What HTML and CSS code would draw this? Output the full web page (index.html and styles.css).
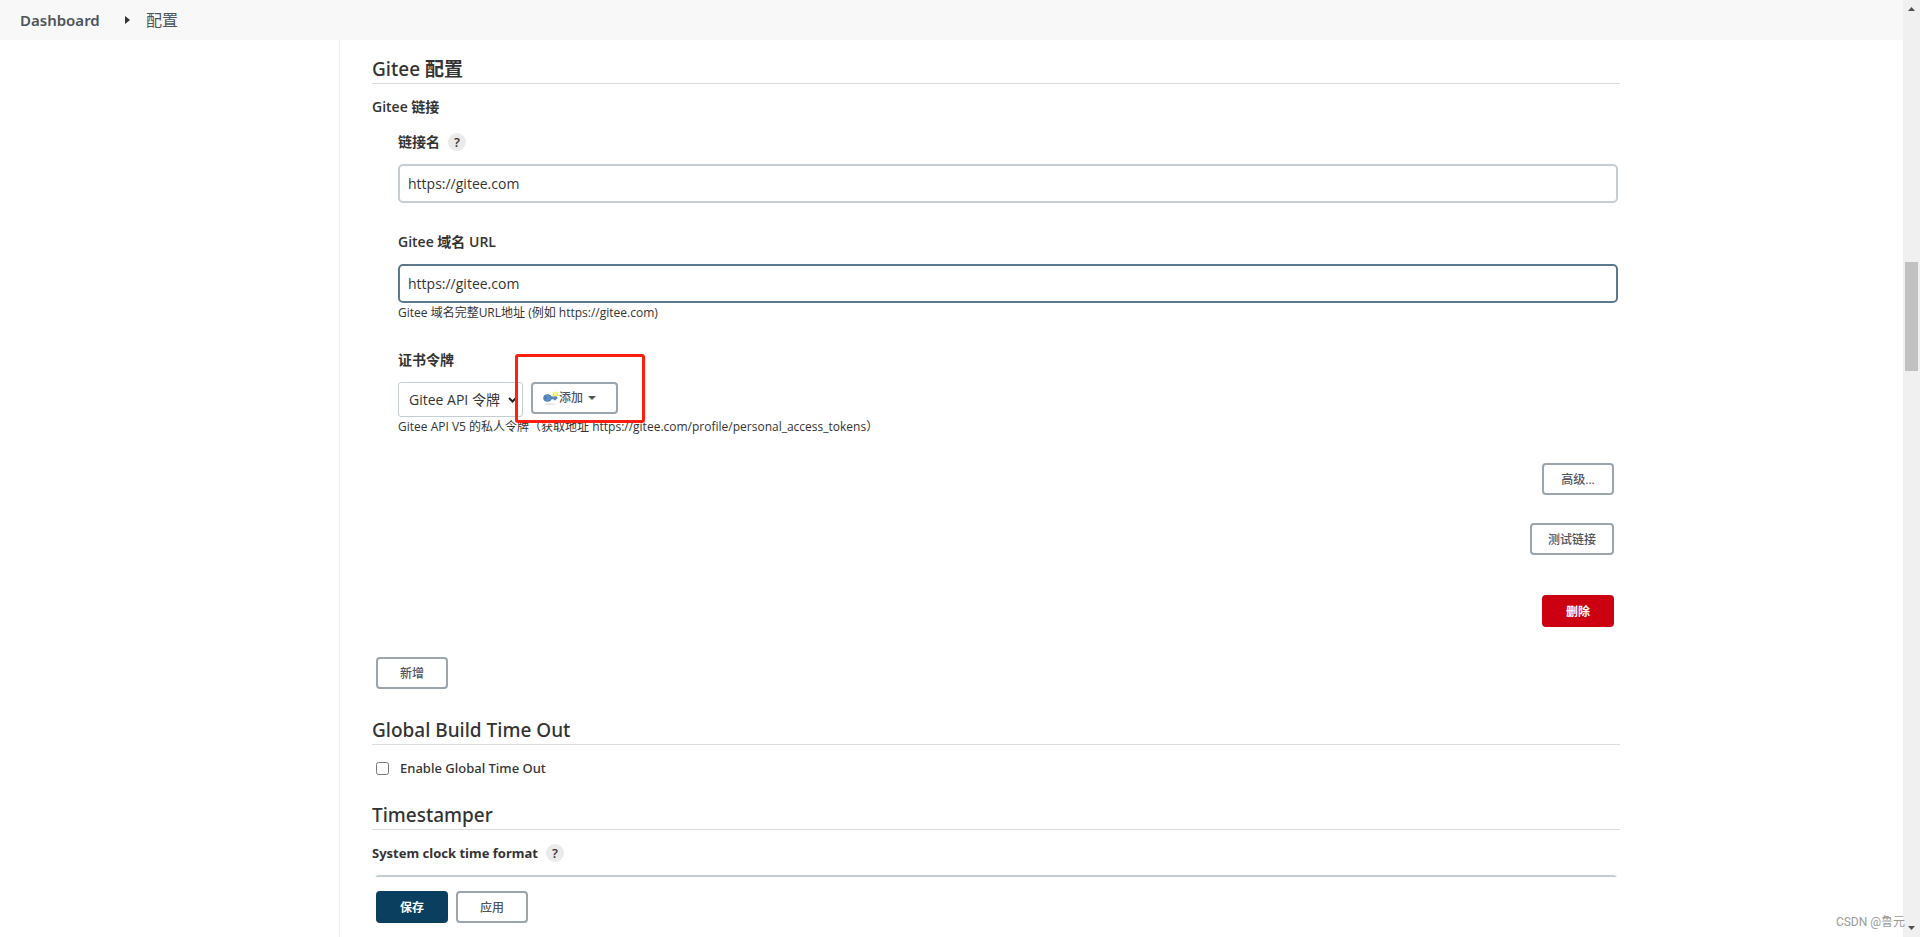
FILE: index.html
```html
<!DOCTYPE html>
<html lang="zh-CN">
<head>
<meta charset="utf-8">
<title>配置 [Jenkins]</title>
<link rel="stylesheet" href="styles.css">
</head>
<body>
<div class="app">
  <nav class="breadcrumbs" aria-label="breadcrumbs">
    <a class="crumb crumb-home" href="#">Dashboard</a>
    <svg class="crumb-arrow" width="5" height="8" viewBox="0 0 5 8" aria-hidden="true"><path d="M0 0L5 4L0 8Z" fill="#333"/></svg>
    <a class="crumb" href="#">配置</a>
  </nav>
  <div class="page">
    <aside class="side"></aside>
    <form class="config">
      <main class="sections">
        <section class="section">
          <h2 class="section-title">Gitee <b>配置</b></h2>
          <h3 class="label">Gitee 链接</h3>
          <div class="nested">
            <div class="field">
              <div class="label-row"><label class="label" for="name">链接名</label><button type="button" class="help">?</button></div>
              <input class="text" id="name" type="text" value="https://gitee.com">
            </div>
            <div class="field">
              <div class="label-row"><label class="label" for="url">Gitee 域名 URL</label></div>
              <input class="text text-active" id="url" type="text" value="https://gitee.com">
              <p class="hint">Gitee 域名完整URL地址 (例如 https://gitee.com)</p>
            </div>
            <div class="field">
              <div class="label-row"><label class="label" for="token">证书令牌</label></div>
              <div class="token-row">
                <span class="select-wrap">
                  <select class="select" id="token"><option>Gitee API 令牌</option></select>
                  <svg class="chevron" width="9" height="6" viewBox="0 0 9 6" aria-hidden="true"><path d="M1 1L4.500 4.500L8 1" fill="none" stroke="#222" stroke-width="2"/></svg>
                </span>
                <span class="add-wrap">
                  <button type="button" class="btn btn-add">
                    <svg width="16" height="16" viewBox="0 0 16 16" aria-hidden="true">
                      <ellipse cx="7" cy="14" rx="6" ry="1" fill="#e8e8e8"/>
                      <path d="M12 1L13.200 2.500L15.300 2L14.800 4L16 5.500L14 6L12.500 7.200L11 6L9 5.500L10 4L9.500 2L11.300 2.500Z" fill="#f5ed4d"/>
                      <circle cx="12.500" cy="4" r="1.200" fill="#fffbc2"/>
                      <path d="M6 6.800H14V8.900H12.500V10H11V8.900H6Z" fill="#5b8cc2" stroke="#4a74a8" stroke-width=".5"/>
                      <ellipse cx="4.500" cy="8" rx="4" ry="3.500" fill="#5b8cc2" stroke="#4a74a8" stroke-width=".6"/>
                      <circle cx="2.700" cy="7.800" r=".8" fill="#3a5f8d"/>
                    </svg>
                    <span>添加</span>
                    <svg class="caret" width="8" height="4" viewBox="0 0 8 4" aria-hidden="true"><path d="M0 0H8L4 4Z" fill="#4d545d"/></svg>
                  </button>
                  <span class="marker"></span>
                </span>
              </div>
              <p class="hint">Gitee API V5 的私人令牌（获取地址 https://gitee.com/profile/personal_access_tokens）</p>
            </div>
            <div class="actions">
              <button type="button" class="btn">高级...</button>
              <button type="button" class="btn btn-test">测试链接</button>
              <button type="button" class="btn btn-danger">删除</button>
            </div>
          </div>
          <button type="button" class="btn btn-new">新增</button>
        </section>
        <section class="section">
          <h2 class="section-title">Global Build Time Out</h2>
          <label class="check"><input class="box" type="checkbox"><span>Enable Global Time Out</span></label>
        </section>
        <section class="section">
          <h2 class="section-title">Timestamper</h2>
          <div class="label-row label-row-top"><label class="label label-latin" for="clock">System clock time format</label><button type="button" class="help">?</button></div>
          <div class="clock"><input class="text" id="clock" type="text"></div>
        </section>
      </main>
      <footer class="bar">
        <button type="button" class="btn btn-primary">保存</button>
        <button type="button" class="btn">应用</button>
      </footer>
    </form>
  </div>
</div>
<div class="scrollbar" aria-hidden="true">
  <svg class="scroll-end" width="17" height="17" viewBox="0 0 17 17"><path d="M5 11L8.500 7L12 11Z" fill="#505050"/></svg>
  <div class="scroll-before"></div>
  <div class="scroll-thumb"></div>
  <div class="scroll-after"></div>
  <svg class="scroll-end" width="17" height="17" viewBox="0 0 17 17"><path d="M5 6L8.500 10L12 6Z" fill="#505050"/></svg>
</div>
<div class="watermark">CSDN @鲁元</div>
</body>
</html>
```
FILE: styles.css
```css
* { box-sizing: border-box; }
body {
  margin: 0;
  height: 100vh;
  display: flex;
  overflow: hidden;
  background: #fff;
  color: #333;
  font: 14px/20px "Open Sans", "Noto Sans CJK SC", sans-serif;
}
button, input, select { font: inherit; color: inherit; margin: 0; }
h2, h3, p { margin: 0; }

.app { flex: 1; min-width: 0; display: flex; flex-direction: column; }
.breadcrumbs {
  flex: none;
  height: 40px;
  padding: 0 20px;
  display: flex;
  align-items: center;
  background: #f8f8f8;
  font-size: 16px;
}
.crumb { color: #4d545d; text-decoration: none; }
.crumb-home { min-width: 81px; font-family: "Noto Sans", sans-serif; font-size: 15px; font-weight: 600; }
.crumb-arrow { margin: 0 16px 0 24px; }

.page { flex: 1; min-height: 0; display: flex; }
.side { flex: none; width: 339px; }
.config {
  flex: 1;
  min-width: 0;
  display: flex;
  flex-direction: column;
  padding: 0 283px 0 32px;
  border-left: 1px solid #f0f0f0;
}
.sections { flex: 1; min-height: 0; overflow: hidden; padding-top: 16px; }

.section-title {
  height: 28px;
  margin-bottom: 13px;
  border-bottom: 1px solid #dcdcdc;
  font-family: "Noto Sans", "Noto Sans CJK SC", sans-serif;
  font-size: 19px;
  line-height: 27px;
  font-weight: 500;
}
.label { font-size: 14px; line-height: 20px; font-weight: 600; }
.label-latin { font-family: "Noto Sans", sans-serif; font-size: 13px; font-weight: 700; }
.nested { padding: 0 2px 0 26px; }
.field { margin-bottom: 26px; }
.nested .field:first-child { padding-top: 14px; margin-bottom: 28px; }
.label-row { display: flex; align-items: center; gap: 8px; height: 22px; margin-bottom: 11px; }
.label-row-top { height: 20px; margin-bottom: 12px; }
.help {
  width: 18px;
  height: 18px;
  padding: 0;
  border: 0;
  border-radius: 50%;
  background: #eaeaea;
  font-size: 13px;
  line-height: 18px;
  font-weight: 600;
}
.text {
  display: block;
  width: 100%;
  height: 39px;
  padding: 0 8px;
  border: 2px solid #c3cdd2;
  border-radius: 5px;
  background: #fff;
}
.text-active { border-color: #5c788c; outline: 0; }
.hint { font-size: 12px; line-height: 20px; }
.token-row { display: flex; align-items: flex-start; gap: 8px; }
.select-wrap { position: relative; }
.select {
  display: block;
  width: 125px;
  height: 35px;
  padding: 0 10px;
  appearance: none;
  border: 1px solid #c3cdd2;
  border-radius: 3px;
  background: #fff;
}
.chevron { position: absolute; right: 6px; top: 15px; pointer-events: none; }
.add-wrap { position: relative; }
.marker {
  position: absolute;
  inset: -28px -27px -9px -16px;
  border: 3px solid #ff2010;
  border-radius: 3px;
  pointer-events: none;
}

.btn {
  min-width: 72px;
  height: 32px;
  padding: 2px 16px 0;
  border: 2px solid #9aa5ad;
  border-radius: 4px;
  background: #fff;
  color: #4d545d;
  font-size: 12px;
  line-height: 16px;
  font-weight: 500;
}
.btn-add {
  width: 87px;
  padding: 0 10px;
  display: flex;
  align-items: center;
}
.caret { margin-left: 5px; }
.actions { display: flex; flex-direction: column; align-items: flex-end; padding-right: 4px; }
.btn-test { margin-top: 28px; }
.btn-danger { margin-top: 40px; background: #cc0010; border-color: #cc0010; color: #fff; font-weight: 700; }
.btn-new { display: block; margin: 30px 0 28px 4px; }
.btn-primary { background: #0b3f5f; border-color: #0b3f5f; color: #fff; font-weight: 700; }

.check {
  display: flex;
  align-items: center;
  gap: 11px;
  height: 20px;
  margin-bottom: 24px;
  padding-left: 4px;
  font-family: "Noto Sans", sans-serif;
  font-size: 13px;
  font-weight: 500;
}
.box { width: 13px; height: 13px; }
.clock { padding: 0 2px; }
.bar { flex: none; height: 60px; padding: 14px 4px; display: flex; gap: 8px; }

.scrollbar { flex: none; width: 17px; display: flex; flex-direction: column; background: #f0f0f0; }
.scroll-end { flex: none; }
.scroll-before { flex: 245; }
.scroll-thumb { flex: 109; margin: 0 2px; background: #c1c1c1; }
.scroll-after { flex: 549; }
.watermark {
  position: absolute;
  right: 15px;
  bottom: 5px;
  color: #999;
  font: 12px/20px Roboto, "Noto Sans CJK SC", sans-serif;
}
```
